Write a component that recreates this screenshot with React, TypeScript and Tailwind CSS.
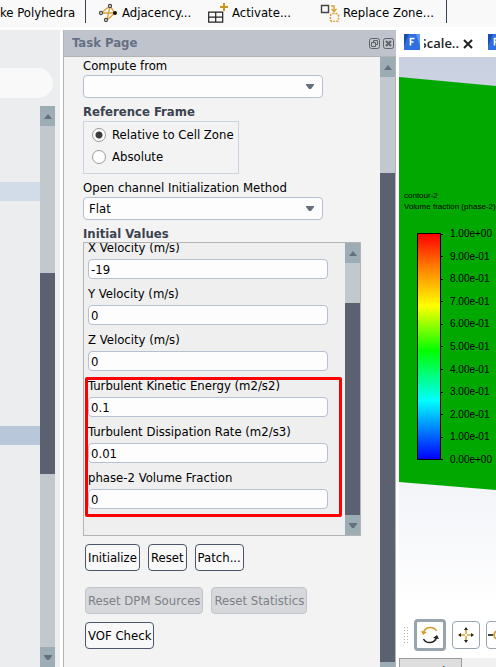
import { useState } from "react";
import type { ReactNode } from "react";
import clsx from "clsx";

const FIELDS = [
  { id: "x-velocity", label: "X Velocity (m/s)", value: "-19" },
  { id: "y-velocity", label: "Y Velocity (m/s)", value: "0" },
  { id: "z-velocity", label: "Z Velocity (m/s)", value: "0" }
];

const PHASE_FIELDS = [
  { id: "tke", label: "Turbulent Kinetic Energy (m2/s2)", value: "0.1" },
  { id: "tdr", label: "Turbulent Dissipation Rate (m2/s3)", value: "0.01" },
  { id: "phase-2", label: "phase-2 Volume Fraction", value: "0" }
];

const LEGEND = [
  "1.00e+00",
  "9.00e-01",
  "8.00e-01",
  "7.00e-01",
  "6.00e-01",
  "5.00e-01",
  "4.00e-01",
  "3.00e-01",
  "2.00e-01",
  "1.00e-01",
  "0.00e+00"
];

function Arrow({ up = false, className }: { up?: boolean; className?: string }) {
  return (
    <svg width="10" height="5" viewBox="0 0 10 5" className={className} aria-hidden="true">
      <path d={up ? "M1 5 5 0l4 5z" : "M1 0h8v1L6 5H4L1 1z"} fill="#66707c" />
    </svg>
  );
}

function ScrollBar({ before, thumb }: { before: string; thumb: string }) {
  return (
    <div className="flex w-[15px] shrink-0 flex-col overflow-hidden bg-[#c1c9cf]">
      <button type="button" aria-label="Scroll up" className="flex h-5 shrink-0 items-center justify-center bg-[#9dadb5]">
        <Arrow up />
      </button>
      <div className={clsx("shrink-0", before)} />
      <div className={clsx("bg-[#5b6170]", thumb)} />
      <button type="button" aria-label="Scroll down" className="mt-auto flex h-5 shrink-0 items-center justify-center bg-[#9dadb5]">
        <Arrow />
      </button>
    </div>
  );
}

function SelectField({ id, label, options }: { id: string; label: string; options: string[] }) {
  return (
    <div className="flex flex-col gap-px">
      <label htmlFor={id} className="leading-4">
        {label}
      </label>
      <div className="relative w-60">
        <select id={id} className="block h-[23px] w-full appearance-none rounded-[4px] border border-[#b5c0d0] bg-[#fdfdfd] px-[5px] leading-5">
          {options.map((option) => (
            <option key={option}>{option}</option>
          ))}
        </select>
        <Arrow className="pointer-events-none absolute top-[9px] right-2" />
      </div>
    </div>
  );
}

function ValueField({ id, label, value }: { id: string; label: string; value: string }) {
  return (
    <div className="flex flex-col gap-[3px]">
      <label htmlFor={id} className="leading-4 whitespace-nowrap">
        {label}
      </label>
      <input id={id} defaultValue={value} className="block h-5 w-60 rounded-[4px] border border-[#b5c0d0] bg-[#fdfdfd] px-[2px]" />
    </div>
  );
}

function ActionButton({ children, disabled = false }: { children: ReactNode; disabled?: boolean }) {
  return (
    <button
      type="button"
      disabled={disabled}
      className="h-[27px] rounded-[4px] border border-[#4b5768] bg-[#f8f8f8] px-[2px] whitespace-nowrap disabled:border-[#c2c5cb] disabled:bg-[#d6d8dc] disabled:text-[#7d8086]"
    >
      {children}
    </button>
  );
}

function Toolbar() {
  return (
    <header className="flex h-[27px] shrink-0 items-start overflow-hidden bg-[#f9f9f9] whitespace-nowrap">
      <button type="button" className="h-[25px] w-[85px] shrink-0 text-left">
        ke Polyhedra
      </button>
      <div className="h-[23px] w-px shrink-0 bg-[#3a4350]" />
      <button type="button" className="ml-3 flex h-[25px] w-[110px] shrink-0 items-center gap-1">
        <svg width="20" height="20" viewBox="0 0 20 20" fill="none" className="shrink-0" aria-hidden="true">
          <path d="M12 3 3 10h14L12 3 9 17l8-7" stroke="#d9a032" strokeWidth="1.3" />
          <g fill="#ddd" stroke="#444" strokeWidth="1.1">
            <circle cx="12" cy="3" r="1.6" />
            <circle cx="3" cy="10" r="1.6" />
            <circle cx="8" cy="17" r="1.6" />
          </g>
          <circle cx="17" cy="10" r="2" fill="#111" />
        </svg>
        Adjacency...
      </button>
      <button type="button" className="flex h-[25px] w-28 shrink-0 items-center gap-1">
        <svg width="20" height="21" viewBox="0 0 20 21" fill="none" className="shrink-0" aria-hidden="true">
          <path d="M.7 10.2h14v10H.7zM.7 15.2h14M7.7 10.2v10" stroke="#222" strokeWidth="1.2" />
          <path d="M16 1v8M12 5h8" stroke="#cf9420" strokeWidth="2" />
        </svg>
        Activate...
      </button>
      <button type="button" className="flex h-[25px] w-[126px] shrink-0 items-center gap-[3px]">
        <svg width="20" height="18" viewBox="0 0 20 18" fill="none" className="shrink-0" aria-hidden="true">
          <path d="M1.5 1.5h7v7h-7z" stroke="#444" strokeWidth="1.4" />
          <path d="M11 2h3v5M11.500 5l2.500 2.500L16.500 5" stroke="#d9a032" strokeWidth="1.400" />
          <rect x="10.500" y="9.500" width="8" height="8" rx="2" stroke="#d9a032" strokeWidth="1.600" strokeDasharray="2 1" />
        </svg>
        Replace Zone...
      </button>
      <div className="h-[23px] w-px shrink-0 bg-[#3a4350]" />
    </header>
  );
}

function OutlinePanel() {
  return (
    <aside className="flex w-[60px] shrink-0 flex-col bg-[#ebedef] pt-[38px]">
      <input aria-label="Filter" className="mr-[7px] block h-[30px] min-w-0 rounded-r-full bg-[#f9f9f9]" />
      <div className="mt-2 flex min-h-0 flex-1 pr-[5px]">
        <div className="flex-1 pt-[76px]">
          <div className="h-[19px] bg-[#d2dce8]" />
          <div className="mt-[225px] h-[19px] bg-[#b8c8da]" />
        </div>
        <ScrollBar before="h-[147px]" thumb="h-[201px]" />
      </div>
    </aside>
  );
}

function TaskPage() {
  const [frame, setFrame] = useState("relative");
  const radio =
    "size-[14px] shrink-0 appearance-none rounded-full border border-[#9a9a9a] bg-white checked:bg-[radial-gradient(circle,#3c3c3c_3px,#ffffff_4px)]";

  return (
    <section className="flex w-[333px] shrink-0 flex-col border-l border-[#b4b4b4] bg-[#f3f3f3]">
      <div className="flex h-[27px] shrink-0 items-center gap-[3px] border-b border-[#b4b4b4] bg-[#bfc3cb] pr-[2px] pl-2">
        <h2 className="flex-1 font-bold text-[#667085]">Task Page</h2>
        <button type="button" aria-label="Float">
          <svg width="11" height="11" viewBox="0 0 11 11" fill="none" stroke="#5f6368" aria-hidden="true">
            <rect x=".5" y=".5" width="10" height="10" rx="2" />
            <path d="M4.500 4.500v-2h4v4h-2M2.500 4.500h4v4h-4z" />
          </svg>
        </button>
        <button type="button" aria-label="Close">
          <svg width="11" height="11" viewBox="0 0 11 11" fill="none" stroke="#5f6368" aria-hidden="true">
            <rect x=".5" y=".5" width="10" height="10" rx="2" />
            <path d="m3 3 5 5M8 3 3 8" strokeWidth="2" />
          </svg>
        </button>
      </div>

      <div className="flex min-h-0 flex-1 border-r border-[#b4b4b4]">
        <div className="flex min-w-0 flex-1 flex-col gap-1.5 overflow-hidden pt-px pr-[19px] pl-[19px]">
          <SelectField id="compute-from" label="Compute from" options={[""]} />

          <div className="flex flex-col gap-px" role="radiogroup" aria-labelledby="reference-frame">
            <h3 id="reference-frame" className="leading-4 font-bold text-[#3b4351]">
              Reference Frame
            </h3>
            <div className="flex h-[53px] w-[156px] flex-col gap-[6px] border border-[#ccd3e0] pt-[5px] pl-2">
              <label className="flex h-4 items-center gap-[6px] whitespace-nowrap">
                <input type="radio" name="frame" className={radio} checked={frame === "relative"} onChange={() => setFrame("relative")} />
                Relative to Cell Zone
              </label>
              <label className="flex h-4 items-center gap-[6px] whitespace-nowrap">
                <input type="radio" name="frame" className={radio} checked={frame === "absolute"} onChange={() => setFrame("absolute")} />
                Absolute
              </label>
            </div>
          </div>

          <SelectField id="open-channel" label="Open channel Initialization Method" options={["Flat"]} />

          <div>
            <h3 className="leading-4 font-bold text-[#3b4351]">Initial Values</h3>
            <div className="flex h-[294px] border border-[#b4b4b4] bg-[#efefef]">
              <div className="flex flex-1 flex-col justify-end gap-[7px] overflow-hidden pb-[26px] pl-1">
                {FIELDS.map((field) => (
                  <ValueField key={field.id} {...field} />
                ))}
                <div className="relative flex w-60 flex-col gap-[7px]">
                  {PHASE_FIELDS.map((field) => (
                    <ValueField key={field.id} {...field} />
                  ))}
                  <div className="pointer-events-none absolute -top-px -right-[14px] -bottom-2 -left-[3px] rounded-[2px] border-3 border-[#fe0000]" />
                </div>
              </div>
              <ScrollBar before="h-10" thumb="flex-1" />
            </div>
          </div>

          <div className="flex flex-col gap-2 pt-[2px] pl-[2px]">
            <div className="mb-2 flex gap-2">
              <ActionButton>Initialize</ActionButton>
              <ActionButton>Reset</ActionButton>
              <ActionButton>Patch...</ActionButton>
            </div>
            <div className="flex gap-2">
              <ActionButton disabled>Reset DPM Sources</ActionButton>
              <ActionButton disabled>Reset Statistics</ActionButton>
            </div>
            <div className="flex">
              <ActionButton>VOF Check</ActionButton>
            </div>
          </div>
        </div>
        <ScrollBar before="h-24" thumb="h-[489px] shrink-0" />
      </div>
    </section>
  );
}

function FileIcon() {
  return (
    <svg width="16" height="16" viewBox="0 0 16 16" className="shrink-0" aria-hidden="true">
      <path d="M0 0h16v16H0z" fill="#2f6fe0" />
      <path d="M0 0h5L0 12z" fill="#1b4fae" />
      <path d="M12 0h4v12z" fill="#5a9af5" />
      <path d="M6.500 11.500v-7h4M6.500 8h3" stroke="#fff" strokeWidth="1.600" fill="none" />
    </svg>
  );
}

function Contour() {
  return (
    <div className="relative min-h-0 flex-1 overflow-hidden bg-linear-to-b from-[#c9d0e0] to-white font-['Liberation_Sans',Arial,sans-serif]">
      <svg className="absolute inset-0 size-full" viewBox="0 0 97 553" preserveAspectRatio="none" aria-hidden="true">
        <path d="M0 20 97 29v404L0 425z" fill="#00a800" />
      </svg>
      <div className="relative pt-[133px] pl-[5px] text-[8px] leading-[11px] whitespace-nowrap">
        <p>contour-2</p>
        <p>Volume fraction (phase-2)</p>
      </div>
      <div className="relative mt-[17px] flex pl-[18px]">
        <div className="mt-1 h-[227px] w-6 border border-black bg-[linear-gradient(#ff0000,#ff8000_15%,#ffff00_32%,#00ff00_52%,#00ffff_74%,#0080ff_87%,#0000ff)]" />
        <ul className="flex h-[236px] flex-col justify-between text-[10px] leading-[10px] whitespace-nowrap">
          {LEGEND.map((value) => (
            <li key={value} className="flex items-center gap-[7px]">
              <span className="h-px w-[2px] bg-black" />
              {value}
            </li>
          ))}
        </ul>
      </div>
    </div>
  );
}

function GraphicsView() {
  const tool = "flex size-7 shrink-0 items-center justify-center rounded-[4px] border border-[#98a5b1] bg-white";

  return (
    <main className="flex min-w-0 flex-1 flex-col overflow-hidden bg-white">
      <div className="flex h-[27px] shrink-0 items-start gap-1 pt-1 pl-[5px] font-['Open_Sans',sans-serif] text-[13px] leading-[19px] font-semibold text-[#222222]">
        <FileIcon />
        <span className="flex w-[35px] shrink-0 justify-end overflow-hidden whitespace-nowrap">Scale..</span>
        <button type="button" aria-label="Close tab" className="mt-[5px] mr-[11px] shrink-0">
          <svg width="10" height="10" viewBox="0 0 10 10" stroke="#222" strokeWidth="2" aria-hidden="true">
            <path d="m1 1 8 8M9 1 1 9" />
          </svg>
        </button>
        <FileIcon />
      </div>

      <Contour />

      <div className="flex h-12 shrink-0 items-center gap-[6px] pt-[2px] pl-[5px]">
        <svg width="4" height="16" viewBox="0 0 4 16" className="shrink-0" aria-hidden="true">
          <path d="M.5 0v16M3.500 0v16" stroke="#b0b0b0" strokeDasharray="1 2" />
        </svg>
        <button
          type="button"
          aria-label="Rotate"
          className="flex size-8 shrink-0 items-center justify-center rounded-[4px] border-3 border-[#98a5b1] bg-white"
        >
          <svg width="18" height="18" viewBox="0 0 18 18" fill="none" strokeWidth="1.500" aria-hidden="true">
            <path d="M2.500 7C4 0 13 0 15.500 5" stroke="#d59a2a" />
            <path d="m0 5 2 4 4-3z" fill="#d59a2a" />
            <path d="M15.500 11C14 18 5 18 2.500 13" stroke="#222" />
            <path d="m18 13-2-4-4 3z" fill="#222" />
          </svg>
        </button>
        <button type="button" aria-label="Pan" className={tool}>
          <svg width="18" height="18" viewBox="0 0 18 18" fill="none" className="shrink-0" aria-hidden="true">
            <path d="M9 3v12M3 9h12" stroke="#d9a032" strokeWidth="1.500" />
            <path d="m9 1 2 3H7zM9 17l2-3H7zM1 9l3-2v4zM17 9l-3-2v4z" fill="#222" />
            <path d="M8 8h2v2H8z" fill="#fff" />
          </svg>
        </button>
        <button type="button" aria-label="Zoom" className={tool}>
          <svg width="24" height="18" viewBox="0 0 24 18" fill="none" className="shrink-0" aria-hidden="true">
            <path d="M0 9h5" stroke="#444" strokeWidth="2" />
            <circle cx="10" cy="9" r="4" stroke="#d59a2a" strokeWidth="1.700" />
          </svg>
        </button>
      </div>

      <div className="h-[9px] shrink-0 overflow-hidden bg-[#f1f1f1]">
        <button type="button" className="h-6 w-[63px] border border-[#9c9c9c] bg-[#dedede] pt-1 text-[12px] leading-4">
          Console
        </button>
      </div>
    </main>
  );
}

export default function App() {
  return (
    <div className="flex h-screen flex-col gap-[3px] overflow-hidden bg-white font-['DejaVu_Sans_Condensed','DejaVu_Sans',sans-serif] text-[13px] text-black">
      <Toolbar />
      <div className="flex min-h-0 flex-1 gap-[3px]">
        <OutlinePanel />
        <TaskPage />
        <GraphicsView />
      </div>
    </div>
  );
}
